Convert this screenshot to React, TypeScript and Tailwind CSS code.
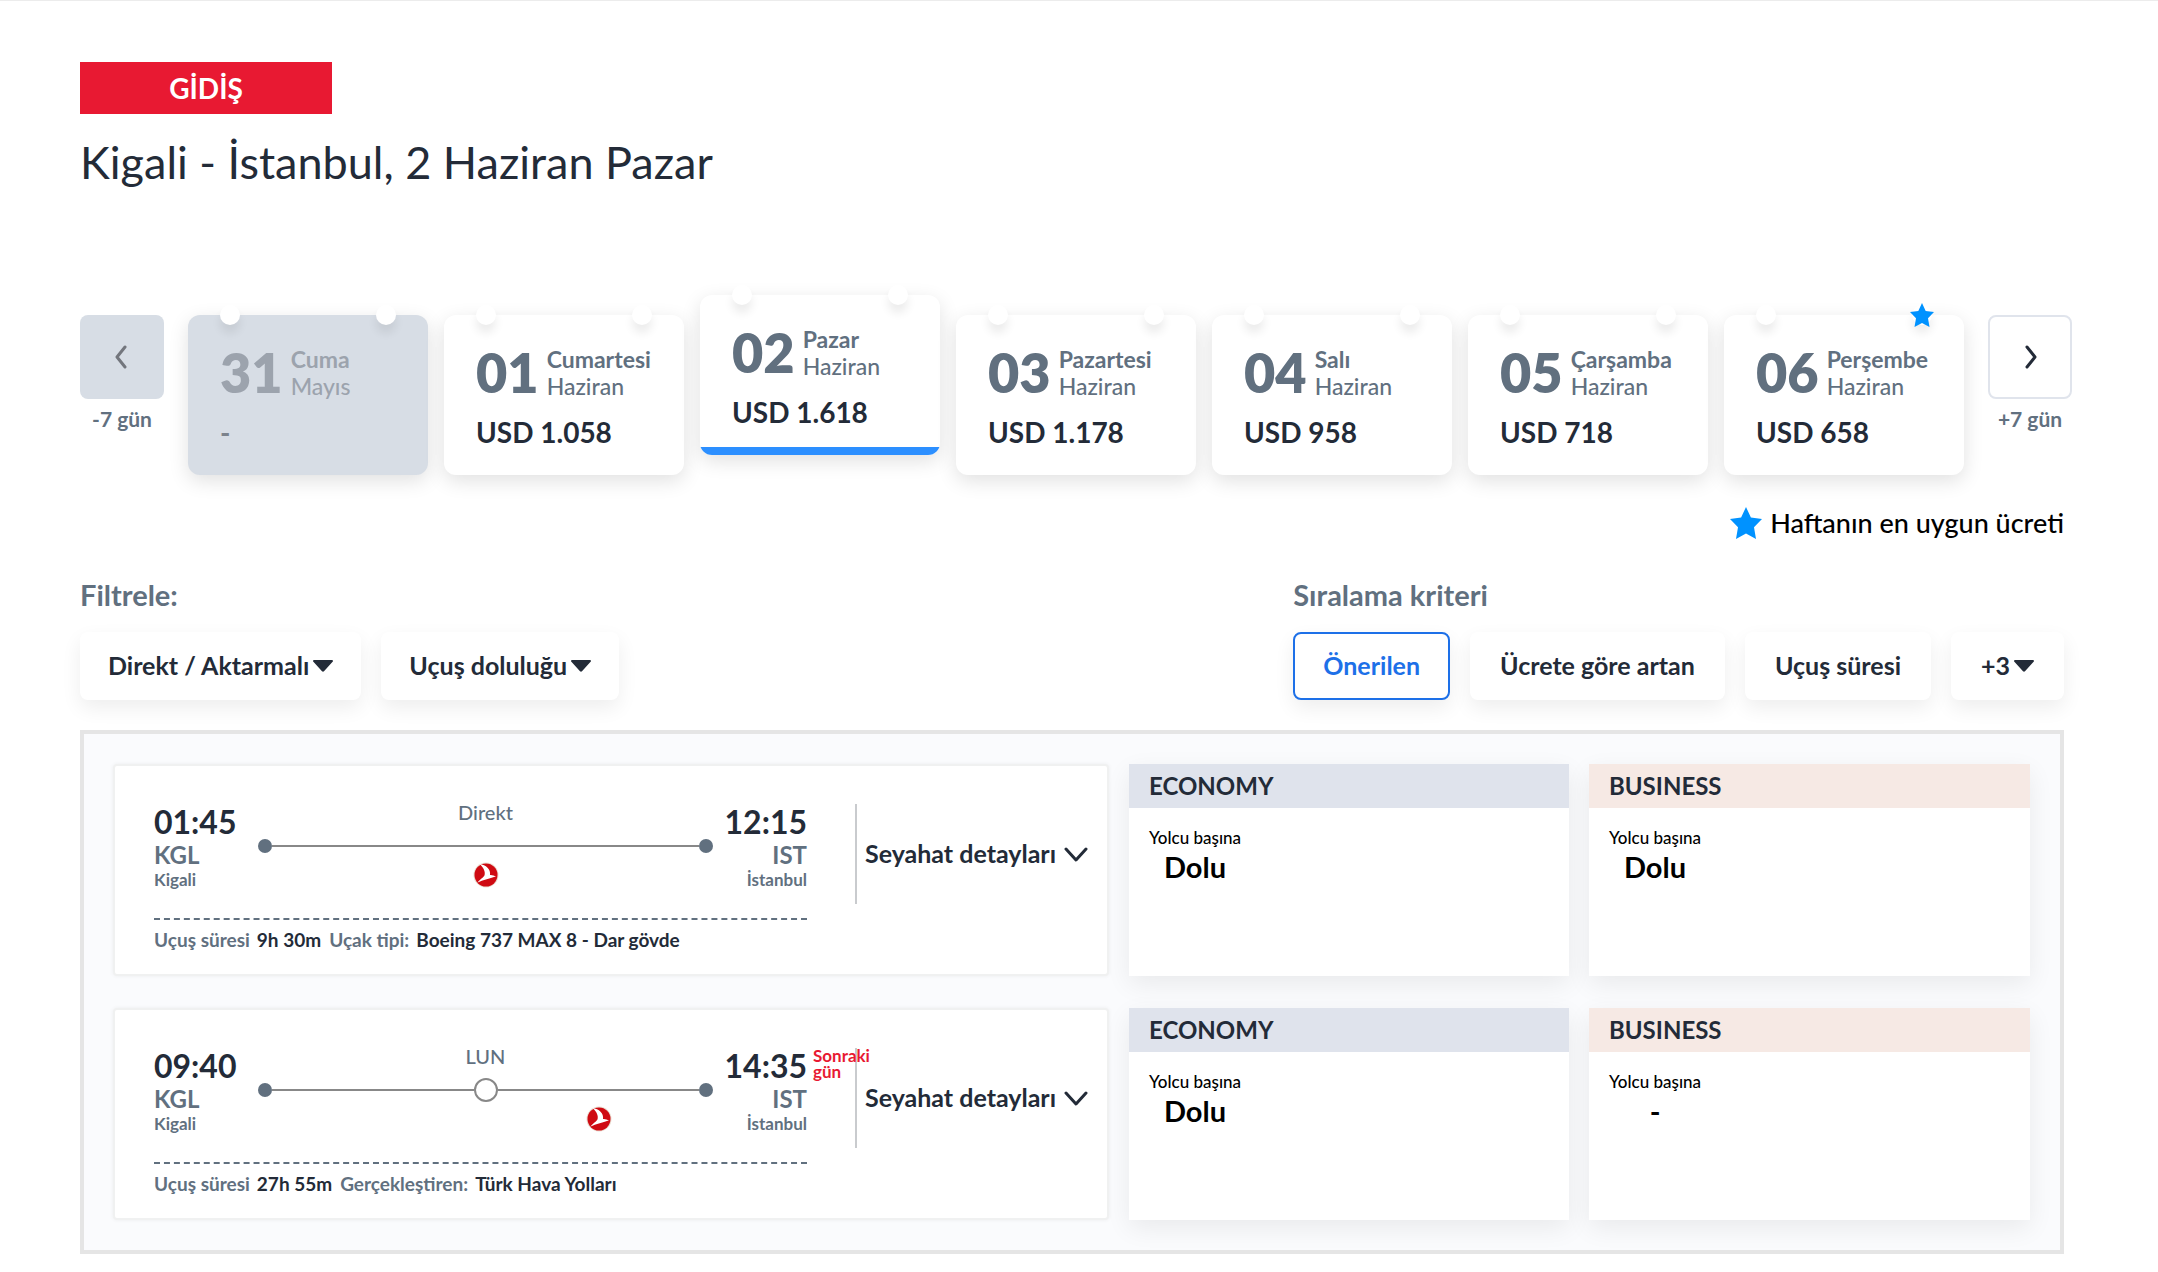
import clsx from 'clsx';
import type {ReactNode} from 'react';

type Day = {
  date: string;
  weekday: string;
  month: string;
  price: string;
  disabled?: boolean;
  selected?: boolean;
  cheapest?: boolean;
};

type Cabin = {name: string; fare: string; tone: string};

type Flight = {
  departure: string;
  arrival: string;
  nextDay?: boolean;
  stopLabel: string;
  hasStop?: boolean;
  /** One entry per leg, true where the carrier logo is shown. */
  legs: boolean[];
  info: [string, string][];
  cabins: Cabin[];
};

const days: Day[] = [
  {date: '31', weekday: 'Cuma', month: 'Mayıs', price: '-', disabled: true},
  {date: '01', weekday: 'Cumartesi', month: 'Haziran', price: 'USD 1.058'},
  {date: '02', weekday: 'Pazar', month: 'Haziran', price: 'USD 1.618', selected: true},
  {date: '03', weekday: 'Pazartesi', month: 'Haziran', price: 'USD 1.178'},
  {date: '04', weekday: 'Salı', month: 'Haziran', price: 'USD 958'},
  {date: '05', weekday: 'Çarşamba', month: 'Haziran', price: 'USD 718'},
  {date: '06', weekday: 'Perşembe', month: 'Haziran', price: 'USD 658', cheapest: true},
];

const flights: Flight[] = [
  {
    departure: '01:45',
    arrival: '12:15',
    stopLabel: 'Direkt',
    legs: [true],
    info: [
      ['Uçuş süresi', '9h 30m'],
      ['Uçak tipi:', 'Boeing 737 MAX 8 - Dar gövde'],
    ],
    cabins: [
      {name: 'ECONOMY', fare: 'Dolu', tone: 'bg-[#dfe3ec]'},
      {name: 'BUSINESS', fare: 'Dolu', tone: 'bg-[#f6e9e4]'},
    ],
  },
  {
    departure: '09:40',
    arrival: '14:35',
    nextDay: true,
    stopLabel: 'LUN',
    hasStop: true,
    legs: [false, true],
    info: [
      ['Uçuş süresi', '27h 55m'],
      ['Gerçekleştiren:', 'Türk Hava Yolları'],
    ],
    cabins: [
      {name: 'ECONOMY', fare: 'Dolu', tone: 'bg-[#dfe3ec]'},
      {name: 'BUSINESS', fare: '-', tone: 'bg-[#f6e9e4]'},
    ],
  },
];

function Star({className}: {className?: string}) {
  return (
    <svg viewBox="0 0 32 32" className={className} aria-hidden="true">
      <path fill="#0092ff" d="M16 0l4.9 10.6L32 12l-8 8.2 2 11.8-10-5.4L6 32l2-11.8L0 12l11.1-1.4z" />
    </svg>
  );
}

function Caret() {
  return (
    <svg viewBox="0 0 20 12" className="h-3 w-5" aria-hidden="true">
      <path fill="#232b38" d="M1 0h18c1 0 1.3 1 .6 1.8l-8.6 9.5c-.5.6-1.5.6-2 0L.4 1.8C-.3 1 0 0 1 0z" />
    </svg>
  );
}

function Chevron({d}: {d: string}) {
  return (
    <svg viewBox="0 0 24 24" fill="none" className="size-6" aria-hidden="true">
      <path d={d} stroke="currentColor" strokeWidth="3" strokeLinecap="round" strokeLinejoin="round" />
    </svg>
  );
}

function CarrierLogo() {
  return (
    <svg viewBox="0 0 26 26" className="size-[26px]" role="img" aria-label="Türk Hava Yolları">
      <circle cx="13" cy="13" r="12.5" fill="#e9dcd0" />
      <circle cx="13" cy="13" r="11.5" fill="#cf0a12" />
      <path fill="#fff" d="M6.500 2C13 2.500 18 7.500 17 13c2-.2 4 .4 6 1.400C18 16 9.500 18 4.500 20.500 6.500 17.500 10.800 15.500 11.600 13 12.500 9.500 10.500 5.500 6.500 2z" />
    </svg>
  );
}

function DayCard({day}: {day: Day}) {
  return (
    <button
      type="button"
      disabled={day.disabled}
      aria-pressed={!!day.selected}
      className={clsx(
        'relative flex h-40 min-w-0 flex-1 flex-col items-start rounded-xl pt-[30px] pl-8 text-left whitespace-nowrap shadow-[0_6px_20px_rgba(0,0,0,0.12)]',
        day.disabled ? 'bg-[#d7dde5]' : 'bg-white',
        day.selected ? 'mb-5' : 'mt-5',
      )}
    >
      <span className="absolute -top-2.5 left-8 size-5 rounded-full bg-white shadow-[0_8px_10px_rgba(0,0,0,0.08)]" />
      <span className="absolute -top-2.5 right-8 size-5 rounded-full bg-white shadow-[0_8px_10px_rgba(0,0,0,0.08)]" />
      {day.cheapest && <Star className="absolute -top-3 right-[30px] size-6" />}
      <span className={clsx('flex items-end gap-2', day.disabled ? 'text-[#9ca3ad]' : 'text-[#61707f]')}>
        <span className="text-[54px] leading-[55px] font-extrabold">{day.date}</span>
        <span className="text-[23px] leading-[27px]">
          <span className="block font-bold">{day.weekday}</span>
          <span className="block font-medium">{day.month}</span>
        </span>
      </span>
      <span
        className={clsx(
          'mt-3.5 text-[28px] leading-9 font-bold',
          day.disabled ? 'text-[#7b828c]' : 'text-[#232b38]',
        )}
      >
        {day.price}
      </span>
      {day.selected && (
        <span className="absolute inset-0 overflow-hidden rounded-xl">
          <span className="absolute inset-x-0 bottom-0 h-2 bg-[#2c8fff]" />
        </span>
      )}
    </button>
  );
}

function WeekNav({label, disabled, d}: {label: string; disabled?: boolean; d: string}) {
  return (
    <div className="mt-5 w-[84px] flex-none text-center">
      <button
        type="button"
        disabled={disabled}
        aria-label={label}
        className={clsx(
          'flex size-[84px] items-center justify-center rounded-lg',
          disabled ? 'bg-[#d7dde5] text-[#73767d]' : 'border-2 border-[#e0e4ec] bg-white text-[#232b38]',
        )}
      >
        <Chevron d={d} />
      </button>
      <p className="mt-1.5 text-[21px] leading-7 font-bold text-[#61707f]">{label}</p>
    </div>
  );
}

function PillButton({
  active,
  caret,
  wide,
  children,
}: {
  active?: boolean;
  caret?: boolean;
  wide?: boolean;
  children: ReactNode;
}) {
  return (
    <button
      type="button"
      aria-haspopup={caret ? 'menu' : undefined}
      aria-pressed={caret ? undefined : !!active}
      className={clsx(
        'flex h-[68px] items-center gap-1 rounded-lg border-2 bg-white text-[25px] font-bold whitespace-nowrap shadow-[0_8px_20px_rgba(0,0,0,0.07)]',
        wide ? 'px-7' : 'px-[26px]',
        active ? 'border-[#1d70e8] text-[#1d70e8]' : 'border-transparent text-[#232b38]',
      )}
    >
      {children}
      {caret && <Caret />}
    </button>
  );
}

function Route({flight}: {flight: Flight}) {
  return (
    <div className="flex h-[100px]">
      <div className="w-[104px] flex-none">
        <p className="text-[32px] leading-9 font-bold">{flight.departure}</p>
        <p className="text-2xl leading-[30px] font-bold text-[#61707f]">KGL</p>
        <p className="text-[17px] leading-5 font-bold text-[#61707f]">Kigali</p>
      </div>
      <div className="flex-1">
        <p className="text-center text-xl leading-4 font-medium text-[#61707f]">{flight.stopLabel}</p>
        <div className="mt-3.5 flex h-6 items-center">
          <span className="size-3.5 rounded-full bg-[#61707f]" />
          <span className="h-0.5 flex-1 bg-[#888]" />
          {flight.hasStop && (
            <>
              <span className="size-6 rounded-full border-2 border-[#888] bg-white" />
              <span className="h-0.5 flex-1 bg-[#888]" />
            </>
          )}
          <span className="size-3.5 rounded-full bg-[#61707f]" />
        </div>
        <div className="mt-1 flex">
          {flight.legs.map((shown, i) => (
            <div key={i} className="flex flex-1 justify-center">
              {shown && <CarrierLogo />}
            </div>
          ))}
        </div>
      </div>
      <div className="relative w-[94px] flex-none text-right">
        <p className="text-[32px] leading-9 font-bold">{flight.arrival}</p>
        {flight.nextDay && (
          <span className="absolute top-0 left-full ml-1.5 text-left text-[17px] leading-4 font-bold text-[#e81932]">
            Sonraki gün
          </span>
        )}
        <p className="text-2xl leading-[30px] font-bold text-[#61707f]">IST</p>
        <p className="text-[17px] leading-5 font-bold text-[#61707f]">İstanbul</p>
      </div>
    </div>
  );
}

function FlightRow({flight}: {flight: Flight}) {
  return (
    <article className="grid min-h-[212px] grid-cols-[996fr_440fr_441fr] gap-5">
      <div className="flex rounded-sm border-2 border-[#f0f1f1] bg-white pt-[38px] shadow-[0_0_4px_rgba(0,0,0,0.06)]">
        <div className="flex-1 pl-[39px]">
          <Route flight={flight} />
          <p className="mt-3.5 flex gap-2 border-t-2 border-dashed border-[#61707f] pt-2 text-[19px] leading-6 font-bold whitespace-nowrap">
            {flight.info.map(([name, value]) => (
              <span key={name} className="flex gap-[7px]">
                <span className="text-[#61707f]">{name}</span>
                <span>{value}</span>
              </span>
            ))}
          </p>
        </div>
        <div className="ml-12 h-[100px] w-[252px] flex-none border-l-2 border-[#c9cbce]">
          <button type="button" className="flex h-full w-full items-center gap-2 pl-2 text-[25px] font-bold whitespace-nowrap">
            Seyahat detayları
            <Chevron d="M2 7l10 11 10-11" />
          </button>
        </div>
      </div>
      {flight.cabins.map((cabin) => (
        <section key={cabin.name} className="bg-white shadow-[0_8px_24px_rgba(0,0,0,0.07)]">
          <h3 className={clsx('px-5 text-2xl leading-[44px] font-bold', cabin.tone)}>{cabin.name}</h3>
          <div className="ml-5 inline-block pt-[18px] text-center text-black">
            <p className="text-[17px] leading-6 font-medium">Yolcu başına</p>
            <p className="text-[29px] leading-[34px] font-bold">{cabin.fare}</p>
          </div>
        </section>
      ))}
    </article>
  );
}

export default function App() {
  return (
    <main
      lang="tr"
      className="min-h-screen border-t border-[#ececec] bg-white pt-[61px] pr-[86px] pb-[18px] pl-20 font-['Lato','Noto_Sans',sans-serif] text-[#232b38]"
    >
      <p className="w-[252px] bg-[#e81932] text-center text-[28px] leading-[52px] font-bold text-white">GİDİŞ</p>
      <h1 className="mt-4 text-[45px] leading-[64px]">Kigali - İstanbul, 2 Haziran Pazar</h1>

      <nav aria-label="Tarih seçimi" className="mt-[101px] flex gap-6">
        <WeekNav label="-7 gün" disabled d="M15 2L7 12l8 10" />
        <div className="flex min-w-0 flex-1 gap-4">
          {days.map((day) => (
            <DayCard key={day.date} day={day} />
          ))}
        </div>
        <WeekNav label="+7 gün" d="M9 2l8 10-8 10" />
      </nav>

      <div className="mr-2">
        <p className="mt-[30px] flex items-center justify-end gap-2 text-[27px] leading-9 font-medium text-black">
          <Star className="size-8" />
          Haftanın en uygun ücreti
        </p>

        <div className="mt-9 flex justify-between">
          <section>
            <h2 className="text-[29px] leading-9 font-bold text-[#61707f]">Filtrele:</h2>
            <div className="mt-[19px] flex gap-5">
              <PillButton caret>Direkt / Aktarmalı</PillButton>
              <PillButton caret>Uçuş doluluğu</PillButton>
            </div>
          </section>
          <section>
            <h2 className="text-[29px] leading-9 font-bold text-[#61707f]">Sıralama kriteri</h2>
            <div className="mt-[19px] flex gap-5">
              <PillButton wide active>
                Önerilen
              </PillButton>
              <PillButton wide>Ücrete göre artan</PillButton>
              <PillButton wide>Uçuş süresi</PillButton>
              <PillButton wide caret>
                +3
              </PillButton>
            </div>
          </section>
        </div>

        <div className="mt-[30px] flex flex-col gap-8 border-4 border-[#e5e5e5] bg-[#fafbfd] py-[30px] pr-[30px] pl-[29px]">
          {flights.map((flight) => (
            <FlightRow key={flight.departure} flight={flight} />
          ))}
        </div>
      </div>
    </main>
  );
}
